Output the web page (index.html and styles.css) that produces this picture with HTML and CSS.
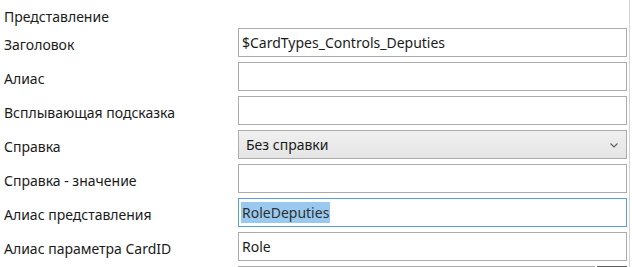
FILE: index.html
```html
<!DOCTYPE html>
<html lang="ru">
<head>
    <meta charset="UTF-8">
    <title>Представление</title>
    <link rel="stylesheet" href="styles.css">
</head>
<body>
    <div class="panel">
        <div class="header">Представление</div>

        <div class="row">
            <span class="label">Заголовок</span>
            <div class="field">$CardTypes_Controls_Deputies</div>
        </div>
        <div class="row">
            <span class="label">Алиас</span>
            <div class="field"></div>
        </div>
        <div class="row">
            <span class="label">Всплывающая подсказка</span>
            <div class="field"></div>
        </div>
        <div class="row">
            <span class="label">Справка</span>
            <div class="field select">
                <span>Без справки</span>
                <svg class="chevron" width="8" height="5" viewBox="0 0 8 5">
                    <path d="M0.5 0.5 L4 4 L7.5 0.5" fill="none" stroke="#5f5f5f" stroke-width="1.2"/>
                </svg>
            </div>
        </div>
        <div class="row">
            <span class="label">Справка - значение</span>
            <div class="field"></div>
        </div>
        <div class="row">
            <span class="label">Алиас представления</span>
            <div class="field focused"><span class="selected">RoleDeputies</span></div>
        </div>
        <div class="row">
            <span class="label">Алиас параметра CardID</span>
            <div class="field">Role</div>
        </div>
        <div class="row">
            <span class="label"></span>
            <div class="field with-button">
                <div class="input-part"></div>
                <div class="button-part"></div>
            </div>
        </div>
    </div>
</body>
</html>
```

FILE: styles.css
```css
body {
    margin: 0;
    background: #fff;
    color: #1b1b1b;
    font-family: "Noto Sans", "Open Sans", sans-serif;
    font-size: 14px;
    overflow: hidden;
}

.panel {
    width: 629px;
    height: 267px;
    border-right: 1px solid #d4d4d4;
    overflow: hidden;
}

.header {
    height: 28px;
    padding-left: 4px;
    line-height: 34px;
}

.row {
    display: grid;
    grid-template-columns: 238px 389px;
    height: 29px;
    margin-bottom: 5px;
}

.label {
    padding-left: 4px;
    padding-top: 3px;
    display: flex;
    align-items: center;
    white-space: nowrap;
}

.field {
    box-sizing: border-box;
    height: 29px;
    border: 1px solid #ababab;
    padding: 0 3px;
    display: flex;
    align-items: center;
    white-space: nowrap;
}

.select {
    justify-content: space-between;
    background: linear-gradient(#f0f0f0, #e5e5e5);
    border-color: #acacac;
    padding-left: 7px;
    padding-right: 8px;
}

.chevron {
    margin-top: 1px;
}

.focused {
    border-color: #569de5;
    padding-left: 2px;
}

.selected {
    background: #99c9ef;
    color: #303030;
    padding: 1px 1px;
}

.with-button {
    border: none;
    padding: 0;
    align-items: stretch;
}

.input-part {
    flex: 1;
    border: 1px solid #ababab;
    border-right: none;
}

.button-part {
    width: 30px;
    margin-left: 2px;
    background: #5c5c5c;
}
```
